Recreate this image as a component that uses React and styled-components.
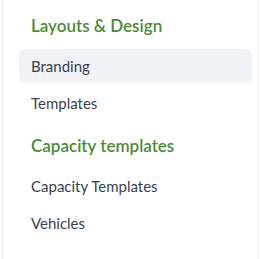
import React from "react";
import styled, { createGlobalStyle } from "styled-components";

const GlobalStyle = createGlobalStyle`
  body {
    margin: 0;
    background: #ffffff;
    font-family: "Lato", "Open Sans", sans-serif;
  }
`;

const Panel = styled.nav`
  box-sizing: border-box;
  width: 256px;
  height: 259px;
  margin-left: 2px;
  padding: 8px 5px 0 16px;
  border-left: 1px solid #ececef;
  border-right: 1px solid #f2f2f4;
  display: flex;
  flex-direction: column;
`;

const Section = styled.section`
  display: flex;
  flex-direction: column;
  gap: 3px;
  & + & {
    margin-top: 8px;
  }
`;

const Heading = styled.h3`
  margin: 0 0 4px;
  padding: 0 12px;
  height: 34px;
  display: flex;
  align-items: center;
  font-size: 17px;
  font-weight: 600;
  color: #4b8b33;
`;

const Item = styled.a`
  box-sizing: border-box;
  height: 34px;
  padding: 0 12px;
  display: flex;
  align-items: center;
  border-radius: 6px;
  font-size: 15px;
  color: #383f52;
  text-decoration: none;
  background: ${(props) => (props.active ? "#f1f2f6" : "transparent")};
`;

const sections = [
  { title: "Layouts & Design", items: ["Branding", "Templates"] },
  { title: "Capacity templates", items: ["Capacity Templates", "Vehicles"] },
];

export default function App() {
  return (
    <>
      <GlobalStyle />
      <Panel>
        {sections.map((section) => (
          <Section key={section.title}>
            <Heading>{section.title}</Heading>
            {section.items.map((item) => (
              <Item key={item} active={item === "Branding"}>
                {item}
              </Item>
            ))}
          </Section>
        ))}
      </Panel>
    </>
  );
}
